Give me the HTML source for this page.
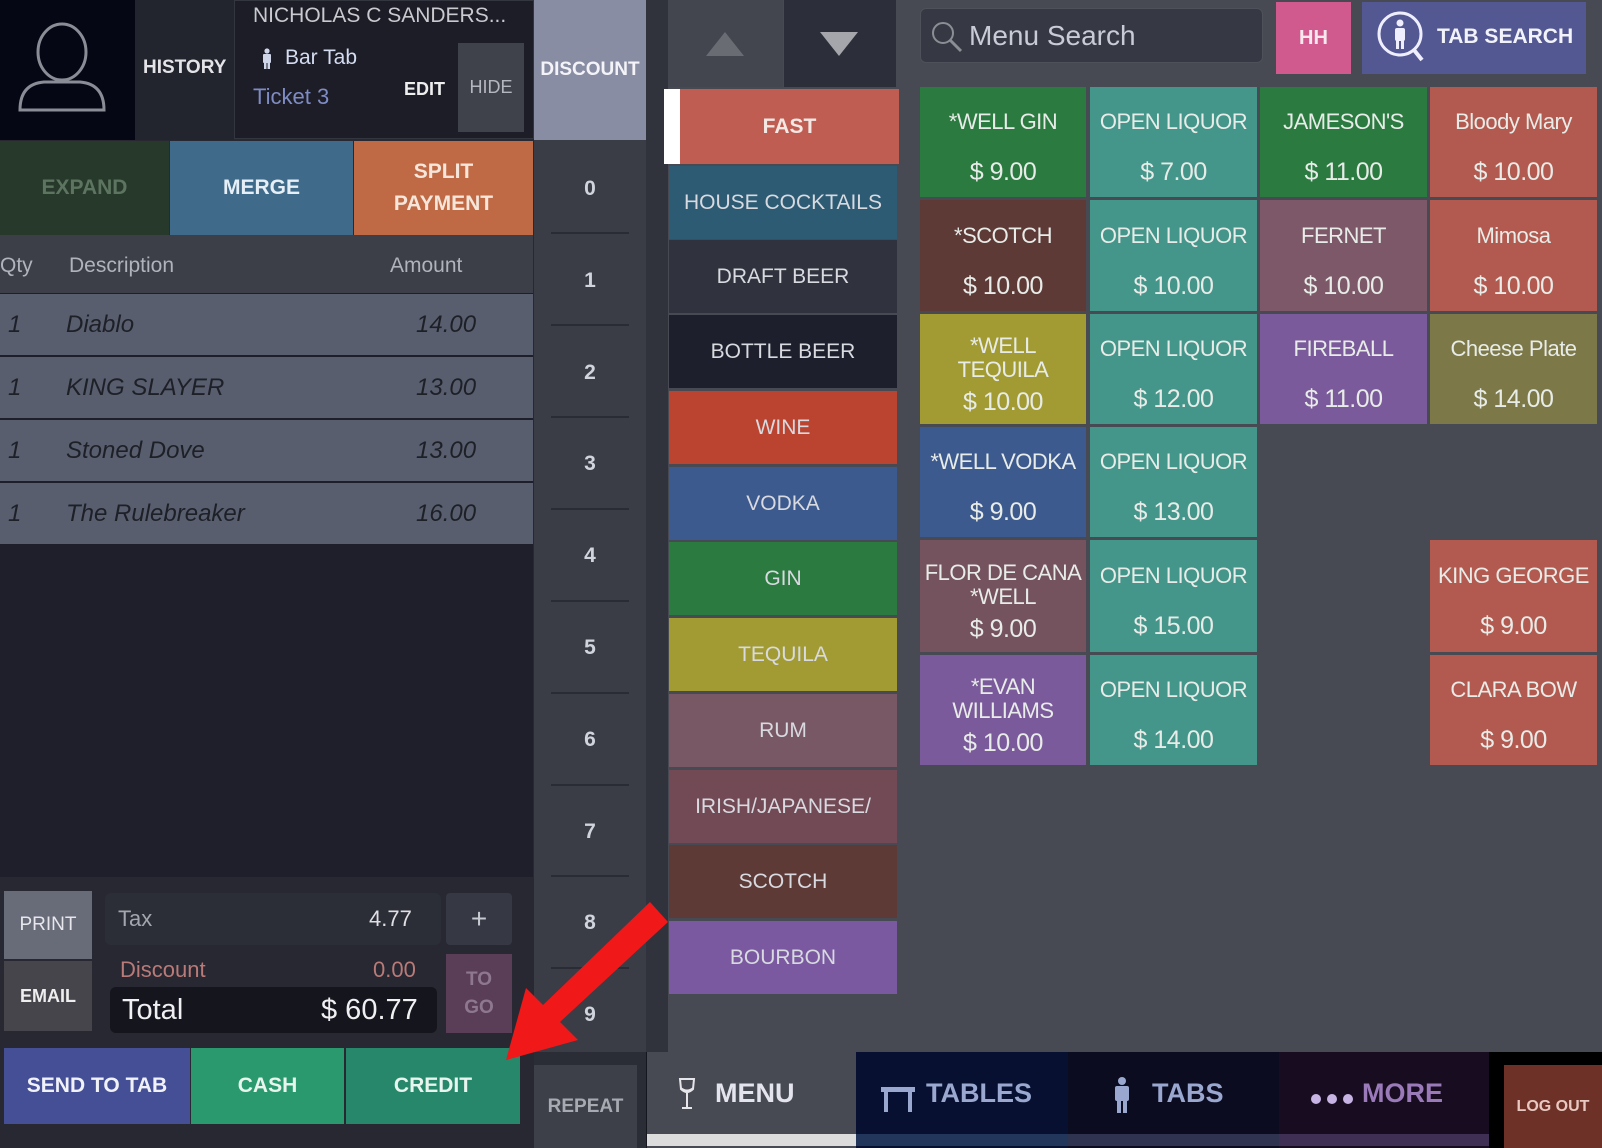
<!DOCTYPE html>
<html><head><meta charset="utf-8"><style>
*{margin:0;padding:0;box-sizing:border-box}
body{width:1602px;height:1148px;background:#474953;position:relative;overflow:hidden;font-family:"Liberation Sans",sans-serif;color:#fff}
.a{position:absolute}
.c{display:flex;align-items:center;justify-content:center;text-align:center}
.b{font-weight:bold}
.g{position:absolute;display:flex;flex-direction:column;align-items:center;justify-content:center;text-align:center;color:#e8ece8;font-size:22px;line-height:26px;letter-spacing:-0.5px;padding-top:10px}
.g .p{margin-top:24px;font-size:25px}
.cat{position:absolute;left:669px;width:228px;height:73px;display:flex;align-items:center;justify-content:center;font-size:21px;color:#d8dae0}
.n{position:absolute;left:551px;width:78px;text-align:center;font-size:21px;font-weight:bold;color:#d0d4dc}
.ln{position:absolute;left:551px;width:78px;height:2px;background:#2a2c35}
.row{position:absolute;left:0;width:533px;height:61px;background:#585e6e;font-style:italic;font-size:24px;color:#1e2028}
.row span{position:absolute;top:17px}
</style></head><body>
<div class="a" style="left:0;top:0;width:534px;height:1148px;background:#272832"></div>
<div class="a" style="left:0;top:0;width:135px;height:140px;background:#050814"></div>
<svg class="a" style="left:14px;top:22px" width="96" height="94" viewBox="0 0 96 94"><ellipse cx="48" cy="30" rx="24" ry="28" fill="none" stroke="#8a8d96" stroke-width="3"/><path d="M6 88 Q6 62 30 60 L66 60 Q90 62 90 88 Z" fill="none" stroke="#8a8d96" stroke-width="3"/></svg>
<div class="a" style="left:135px;top:0;width:99px;height:140px;background:#22242e"></div>
<div class="a b" style="left:143px;top:57px;font-size:19px;color:#e4e4e8">HISTORY</div>
<div class="a" style="left:234px;top:0;width:300px;height:139px;background:#1c1d26;border:1px solid #33353f"></div>
<div class="a" style="left:253px;top:4px;font-size:21px;color:#c9cad0">NICHOLAS C SANDERS...</div>
<svg class="a" style="left:261px;top:48px" width="12" height="22" viewBox="0 0 12 22"><circle cx="6" cy="3" r="2.6" fill="#cfd6ea"/><rect x="2" y="6" width="8" height="9" rx="1" fill="#cfd6ea"/><rect x="3" y="14" width="2.5" height="7" fill="#cfd6ea"/><rect x="6.5" y="14" width="2.5" height="7" fill="#cfd6ea"/></svg>
<div class="a" style="left:285px;top:46px;font-size:21px;color:#d4dcf2">Bar Tab</div>
<div class="a" style="left:253px;top:84px;font-size:22px;color:#7f8cc4">Ticket 3</div>
<div class="a b" style="left:404px;top:79px;font-size:18px;color:#eee">EDIT</div>
<div class="a c" style="left:458px;top:43px;width:66px;height:89px;background:#3f414b;font-size:18px;color:#b5b7c0">HIDE</div>
<div class="a c b" style="left:0;top:141px;width:169px;height:94px;background:#27392b;font-size:21px;color:#5c7460">EXPAND</div>
<div class="a c b" style="left:170px;top:141px;width:183px;height:94px;background:#3f6a8a;font-size:21px;color:#e6eef6">MERGE</div>
<div class="a c b" style="left:354px;top:141px;width:179px;height:94px;background:#c06a45;font-size:21px;line-height:32px;color:#f4e6da">SPLIT<br>PAYMENT</div>
<div class="a" style="left:0;top:235px;width:533px;height:58px;background:#3c3e48"></div>
<div class="a" style="left:0;top:254px;font-size:21px;color:#b0b3bc">Qty</div>
<div class="a" style="left:69px;top:254px;font-size:21px;color:#b0b3bc">Description</div>
<div class="a" style="left:390px;top:254px;font-size:21px;color:#b0b3bc">Amount</div>
<div class="a" style="left:0;top:293px;width:533px;height:584px;background:#1e1f2b"></div>
<div class="row" style="top:294px"><span style="left:8px">1</span><span style="left:66px">Diablo</span><span style="left:416px">14.00</span></div>
<div class="row" style="top:357px"><span style="left:8px">1</span><span style="left:66px">KING SLAYER</span><span style="left:416px">13.00</span></div>
<div class="row" style="top:420px"><span style="left:8px">1</span><span style="left:66px">Stoned Dove</span><span style="left:416px">13.00</span></div>
<div class="row" style="top:483px"><span style="left:8px">1</span><span style="left:66px">The Rulebreaker</span><span style="left:416px">16.00</span></div>
<div class="a c" style="left:4px;top:891px;width:88px;height:68px;background:#686b78;font-size:19px;color:#e6e6ec">PRINT</div>
<div class="a c b" style="left:4px;top:961px;width:88px;height:70px;background:#45454b;font-size:18px;color:#eee">EMAIL</div>
<div class="a" style="left:105px;top:893px;width:336px;height:52px;background:#2b2d37;border-radius:6px"></div>
<div class="a" style="left:118px;top:906px;font-size:22px;color:#a4a6ae">Tax</div>
<div class="a" style="left:369px;top:906px;font-size:22px;color:#e0e0e4">4.77</div>
<div class="a c" style="left:446px;top:893px;width:66px;height:52px;background:#363843;border-radius:4px;font-size:28px;color:#c8cad2">+</div>
<div class="a" style="left:120px;top:957px;font-size:22px;color:#b97a78">Discount</div>
<div class="a" style="left:373px;top:957px;font-size:22px;color:#b97a78">0.00</div>
<div class="a" style="left:110px;top:987px;width:327px;height:46px;background:#14151d;border-radius:6px"></div>
<div class="a" style="left:122px;top:994px;font-size:29px;color:#f0f0f2">Total</div>
<div class="a" style="left:321px;top:994px;font-size:29px;color:#f0f0f2">$ 60.77</div>
<div class="a c b" style="left:446px;top:954px;width:66px;height:79px;background:#5a3e58;font-size:19px;line-height:28px;color:#8e7890">TO<br>GO</div>
<div class="a c b" style="left:4px;top:1048px;width:186px;height:76px;background:#454f96;font-size:21px;color:#f0f2f8">SEND TO TAB</div>
<div class="a c b" style="left:191px;top:1048px;width:153px;height:76px;background:#2a9a6e;font-size:21px;color:#e8f4ee">CASH</div>
<div class="a c b" style="left:346px;top:1048px;width:174px;height:76px;background:#27876a;font-size:21px;color:#e8f4ee">CREDIT</div>
<div class="a" style="left:534px;top:0;width:112px;height:1148px;background:#3a3c46"></div>
<div class="a c b" style="left:534px;top:0;width:112px;height:140px;background:#898da4;font-size:19px;color:#f4f4f8">DISCOUNT</div>
<div class="a" style="left:646px;top:0;width:22px;height:1148px;background:#31333c"></div>
<div class="n" style="top:177px">0</div><div class="ln" style="top:232px"></div>
<div class="n" style="top:269px">1</div><div class="ln" style="top:324px"></div>
<div class="n" style="top:361px">2</div><div class="ln" style="top:416px"></div>
<div class="n" style="top:452px">3</div><div class="ln" style="top:508px"></div>
<div class="n" style="top:544px">4</div><div class="ln" style="top:600px"></div>
<div class="n" style="top:636px">5</div><div class="ln" style="top:692px"></div>
<div class="n" style="top:728px">6</div><div class="ln" style="top:784px"></div>
<div class="n" style="top:820px">7</div><div class="ln" style="top:875px"></div>
<div class="n" style="top:911px">8</div><div class="ln" style="top:967px"></div>
<div class="n" style="top:1003px">9</div>
<div class="a" style="left:534px;top:1052px;width:112px;height:96px;background:#2b2d36"></div>
<div class="a c b" style="left:534px;top:1065px;width:103px;height:83px;background:#3e4049;font-size:19px;color:#a8aab2">REPEAT</div>
<div class="a" style="left:668px;top:0;width:115px;height:87px;background:#43454f"></div>
<div class="a" style="left:784px;top:0;width:112px;height:87px;background:#2c2e39"></div>
<div class="a" style="left:706px;top:32px;width:0;height:0;border-left:19px solid transparent;border-right:19px solid transparent;border-bottom:24px solid #6a6c74"></div>
<div class="a" style="left:820px;top:32px;width:0;height:0;border-left:19px solid transparent;border-right:19px solid transparent;border-top:24px solid #a4a6ac"></div>
<div class="cat b" style="left:664px;top:89px;width:235px;height:75px;background:#bf5d52;color:#f4e8e4;border-left:16px solid #fff">FAST</div>
<div class="cat" style="top:166px;background:#2d5b74">HOUSE COCKTAILS</div>
<div class="cat" style="top:240px;background:#30323d">DRAFT BEER</div>
<div class="cat" style="top:315px;background:#1d1f2d">BOTTLE BEER</div>
<div class="cat" style="top:391px;background:#bb4431">WINE</div>
<div class="cat" style="top:467px;background:#3d5a8e">VODKA</div>
<div class="cat" style="top:542px;background:#2b7a40">GIN</div>
<div class="cat" style="top:618px;background:#a29b33">TEQUILA</div>
<div class="cat" style="top:694px;background:#785864">RUM</div>
<div class="cat" style="top:770px;background:#724a55">IRISH/JAPANESE/</div>
<div class="cat" style="top:845px;background:#5e3a37">SCOTCH</div>
<div class="cat" style="top:921px;background:#7a59a0">BOURBON</div>
<div class="a" style="left:920px;top:8px;width:343px;height:55px;background:#363843;border:1px solid #4e505a;border-radius:6px"></div>
<svg class="a" style="left:930px;top:20px" width="34" height="34" viewBox="0 0 34 34"><circle cx="13" cy="13" r="10" fill="none" stroke="#8c8e96" stroke-width="2"/><path d="M20 20 L31 31" stroke="#8c8e96" stroke-width="3"/></svg>
<div class="a" style="left:969px;top:20px;font-size:28px;color:#c9ccd6">Menu Search</div>
<div class="a c b" style="left:1276px;top:2px;width:75px;height:72px;background:#d05a8e;font-size:20px;color:#f6e8ee">HH</div>
<div class="a" style="left:1362px;top:2px;width:224px;height:72px;background:#535893"></div>
<svg class="a" style="left:1376px;top:10px" width="52" height="56" viewBox="0 0 52 56"><circle cx="24" cy="24" r="21" fill="none" stroke="#eef" stroke-width="3"/><path d="M38 40 L46 50" stroke="#eef" stroke-width="4"/><circle cx="24" cy="13" r="3.5" fill="#eef"/><rect x="19" y="18" width="10" height="13" rx="2" fill="#eef"/><rect x="20" y="30" width="3" height="9" fill="#eef"/><rect x="25" y="30" width="3" height="9" fill="#eef"/></svg>
<div class="a b" style="left:1437px;top:25px;font-size:21px;color:#f2f3fa">TAB SEARCH</div>
<div class="g" style="left:920px;top:87px;width:166px;height:110px;background:#2b7a40">*WELL GIN<div class="p">$ 9.00</div></div>
<div class="g" style="left:1090px;top:87px;width:167px;height:110px;background:#44958a">OPEN LIQUOR<div class="p">$ 7.00</div></div>
<div class="g" style="left:1260px;top:87px;width:167px;height:110px;background:#2b7a40">JAMESON'S<div class="p">$ 11.00</div></div>
<div class="g" style="left:1430px;top:87px;width:167px;height:110px;background:#b35a50">Bloody Mary<div class="p">$ 10.00</div></div>
<div class="g" style="left:920px;top:200px;width:166px;height:111px;background:#5e3a37">*SCOTCH<div class="p">$ 10.00</div></div>
<div class="g" style="left:1090px;top:200px;width:167px;height:111px;background:#44958a">OPEN LIQUOR<div class="p">$ 10.00</div></div>
<div class="g" style="left:1260px;top:200px;width:167px;height:111px;background:#7c5868">FERNET<div class="p">$ 10.00</div></div>
<div class="g" style="left:1430px;top:200px;width:167px;height:111px;background:#b35a50">Mimosa<div class="p">$ 10.00</div></div>
<div class="g" style="left:920px;top:314px;width:166px;height:110px;background:#a29b33;line-height:24px">*WELL<br>TEQUILA<div class="p" style="margin-top:8px">$ 10.00</div></div>
<div class="g" style="left:1090px;top:314px;width:167px;height:110px;background:#44958a">OPEN LIQUOR<div class="p">$ 12.00</div></div>
<div class="g" style="left:1260px;top:314px;width:167px;height:110px;background:#7a5a9a">FIREBALL<div class="p">$ 11.00</div></div>
<div class="g" style="left:1430px;top:314px;width:167px;height:110px;background:#7c7848">Cheese Plate<div class="p">$ 14.00</div></div>
<div class="g" style="left:920px;top:427px;width:166px;height:110px;background:#3d5a8e">*WELL VODKA<div class="p">$ 9.00</div></div>
<div class="g" style="left:1090px;top:427px;width:167px;height:110px;background:#44958a">OPEN LIQUOR<div class="p">$ 13.00</div></div>
<div class="g" style="left:920px;top:540px;width:166px;height:112px;background:#74525e;line-height:24px">FLOR DE CANA<br>*WELL<div class="p" style="margin-top:8px">$ 9.00</div></div>
<div class="g" style="left:1090px;top:540px;width:167px;height:112px;background:#44958a">OPEN LIQUOR<div class="p">$ 15.00</div></div>
<div class="g" style="left:1430px;top:540px;width:167px;height:112px;background:#b35a50">KING GEORGE<div class="p">$ 9.00</div></div>
<div class="g" style="left:920px;top:655px;width:166px;height:110px;background:#7a5a9a;line-height:24px">*EVAN<br>WILLIAMS<div class="p" style="margin-top:8px">$ 10.00</div></div>
<div class="g" style="left:1090px;top:655px;width:167px;height:110px;background:#44958a">OPEN LIQUOR<div class="p">$ 14.00</div></div>
<div class="g" style="left:1430px;top:655px;width:167px;height:110px;background:#b35a50">CLARA BOW<div class="p">$ 9.00</div></div>
<div class="a" style="left:646px;top:1052px;width:956px;height:96px;background:#15161e"></div>
<div class="a" style="left:647px;top:1052px;width:209px;height:96px;background:#474953"></div>
<div class="a" style="left:647px;top:1134px;width:209px;height:12px;background:#dcdcdc"></div>
<div class="a" style="left:856px;top:1052px;width:212px;height:96px;background:#071030"></div>
<div class="a" style="left:856px;top:1134px;width:212px;height:12px;background:#22355a"></div>
<div class="a" style="left:1068px;top:1052px;width:211px;height:96px;background:#0c0c20"></div>
<div class="a" style="left:1068px;top:1134px;width:211px;height:12px;background:#2f3350"></div>
<div class="a" style="left:1279px;top:1052px;width:210px;height:96px;background:#170c20"></div>
<div class="a" style="left:1279px;top:1134px;width:210px;height:12px;background:#3f2f55"></div>
<svg class="a" style="left:677px;top:1077px" width="20" height="34" viewBox="0 0 20 34"><path d="M3 2 L17 2 L16 12 Q10 18 4 12 Z" fill="none" stroke="#e6e6ea" stroke-width="2"/><path d="M4 10 Q10 15 16 10 L16 12 Q10 18 4 12Z" fill="#e6e6ea"/><path d="M10 16 L10 30 M5 31 L15 31" stroke="#e6e6ea" stroke-width="2"/></svg>
<div class="a b" style="left:715px;top:1078px;font-size:27px;color:#e4e4ee">MENU</div>
<svg class="a" style="left:881px;top:1085px" width="34" height="28" viewBox="0 0 34 28"><rect x="0" y="2" width="34" height="5" fill="#9aa8d0"/><rect x="3" y="6" width="4" height="21" fill="#9aa8d0"/><rect x="27" y="6" width="4" height="21" fill="#9aa8d0"/></svg>
<div class="a b" style="left:926px;top:1078px;font-size:27px;color:#9aa8d0">TABLES</div>
<svg class="a" style="left:1112px;top:1076px" width="20" height="38" viewBox="0 0 20 38"><circle cx="10" cy="5" r="4" fill="#9aa8d0"/><rect x="3" y="10" width="14" height="15" rx="2" fill="#9aa8d0"/><rect x="5" y="24" width="4" height="13" fill="#9aa8d0"/><rect x="11" y="24" width="4" height="13" fill="#9aa8d0"/></svg>
<div class="a b" style="left:1152px;top:1078px;font-size:27px;color:#9aa8d0">TABS</div>
<div class="a" style="left:1311px;top:1094px;width:10px;height:10px;border-radius:5px;background:#c8b4e4"></div>
<div class="a" style="left:1327px;top:1094px;width:10px;height:10px;border-radius:5px;background:#c8b4e4"></div>
<div class="a" style="left:1343px;top:1094px;width:10px;height:10px;border-radius:5px;background:#c8b4e4"></div>
<div class="a b" style="left:1362px;top:1078px;font-size:27px;color:#9a7ab8">MORE</div>
<div class="a" style="left:1489px;top:1052px;width:113px;height:96px;background:#000"></div>
<div class="a c b" style="left:1504px;top:1065px;width:98px;height:83px;background:#6e3128;font-size:16px;color:#e8c8c0">LOG OUT</div>
<svg class="a" style="left:0;top:0" width="1602" height="1148"><polygon points="650,902 668,922 560,1022 578,1040 506,1060 526,988 543,1005" fill="#f01818"/></svg>
</body></html>
